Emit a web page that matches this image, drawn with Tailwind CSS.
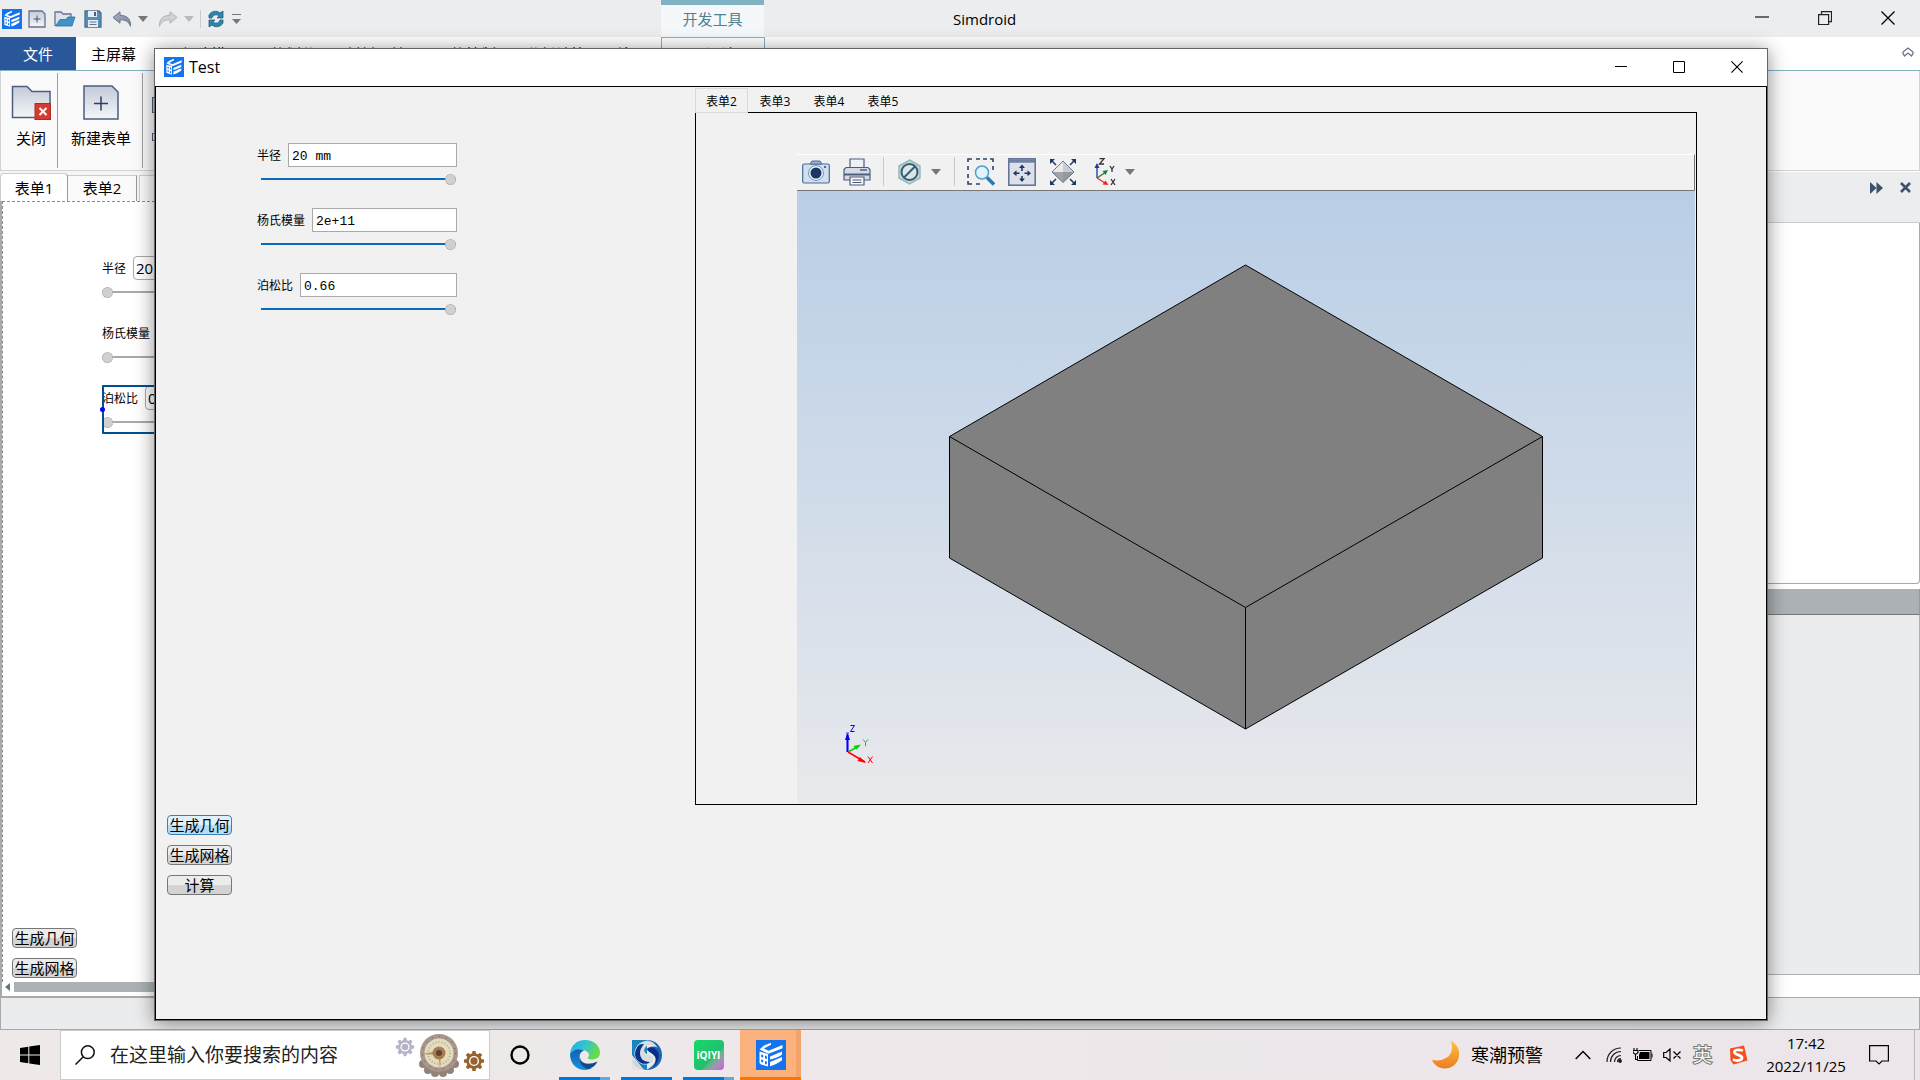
<!DOCTYPE html>
<html lang="zh-CN">
<head>
<meta charset="utf-8">
<title>Simdroid</title>
<script src="https://cdn.jsdelivr.net/npm/@tailwindcss/browser@4"></script>
</head>
<body class="h-screen overflow-hidden flex flex-col bg-white text-black text-[15px] leading-5 font-['Open_Sans','Noto_Sans_CJK_SC',sans-serif]">

<!-- Shared symbols -->
<svg class="absolute size-0" aria-hidden="true">
  <defs>
    <linearGradient id="steel" x1="0" y1="0" x2="0" y2="1"><stop offset="0" stop-color="#c3cbd8"/><stop offset="1" stop-color="#f4f6f8"/></linearGradient>
    <linearGradient id="arrowg" x1="0" y1="0" x2="1" y2="1"><stop offset="0" stop-color="#aab2c2"/><stop offset="1" stop-color="#77839b"/></linearGradient>
    <symbol id="logo" viewBox="0 0 30 30">
      <rect width="30" height="30" fill="#1673ee"/>
      <path d="M3.500 11.500l8.500 2.500v12.500L5 24.500 3.500 23z" fill="#fff"/>
      <path d="M5.200 14.500l2 .6v2.400l-2-.6zM9 15.500l1.800.5v3L9 18.500zM5.200 19.500l2 .6v2.400l-2-.6zM9 21l1.800.5v3L9 24z" fill="#1673ee"/>
      <path d="M3.500 9.500L8 5.500l7-2.700v2L8 8.500l4.500 2.300L26.500 5v3.200l-14 5.500zM14 16.500l12-5v3.200c-4 2.500-8 4-12 4.800zM14 22l12-5v3.200c-4 3-8 5-12 6z" fill="#fff"/>
    </symbol>
    <symbol id="down" viewBox="0 0 10 6"><path d="M0 0h10L5 6z" fill="currentColor"/></symbol>
    <symbol id="close" viewBox="0 0 14 14"><path d="M.5.5l13 13M13.500.5l-13 13" stroke="#000" stroke-width="1.300"/></symbol>
    <symbol id="gear" viewBox="-12 -12 24 24">
      <g fill="currentColor"><rect x="-2" y="-11" width="4" height="22" rx="1"/><rect x="-2" y="-11" width="4" height="22" rx="1" transform="rotate(45)"/><rect x="-2" y="-11" width="4" height="22" rx="1" transform="rotate(90)"/><rect x="-2" y="-11" width="4" height="22" rx="1" transform="rotate(135)"/><circle r="8.500"/></g>
      <circle r="5.500" fill="#fff"/><circle r="4" fill="currentColor"/>
    </symbol>
  </defs>
</svg>

<div class="relative flex-1 min-h-0 overflow-hidden flex flex-col">
  <!-- Main title bar -->
  <header class="h-[37px] shrink-0 bg-[#ebedef] relative flex items-center">
    <div class="flex items-center pl-0.5 text-[#777]">
      <svg class="size-5" role="img" aria-label="Simdroid"><use href="#logo"/></svg>
      <button class="ml-1.5" aria-label="新建"><svg class="size-[18px]" viewBox="0 0 18 18"><path d="M1 1h13l3 3v13H1z" fill="url(#steel)" stroke="#66728c" stroke-width="1.300"/><path d="M9 5.500v7M5.500 9h7" stroke="#44506e"/></svg></button>
      <button class="ml-2" aria-label="打开"><svg class="w-[22px] h-4" viewBox="0 0 22 16"><path d="M1 15V1h6l2 2h8v3" fill="#dde2ea" stroke="#66728c" stroke-width="1.300"/><path d="M1.500 15L6 8.500h6L14 6h7l-3 9z" fill="#3f93c6" stroke="#2d6f9f" stroke-width=".8"/></svg></button>
      <button class="ml-2" aria-label="保存"><svg class="size-[18px]" viewBox="0 0 18 18"><path d="M1 1h14l2 2v14H1z" fill="#4b93bf" stroke="#5a6a86" stroke-width="1.300"/><path d="M4 1h9v6H4zM4 10h10v7H4z" fill="#e9edf1"/><path d="M10 2h2v4h-2z" fill="#44607e"/><path d="M5.500 12h7M5.500 14.500h7" stroke="#66728c"/></svg></button>
      <button class="ml-2.5" aria-label="撤销"><svg class="w-5 h-4" viewBox="0 0 20 16"><path d="M1 6.500L8 .8v3.500c7 0 11 4 10.500 11C16.500 10 13 8.800 8 8.800v3.400z" fill="url(#arrowg)" stroke="#68758f"/></svg></button>
      <button class="ml-1.5" aria-label="撤销列表"><svg class="w-2.5 h-1.5"><use href="#down"/></svg></button>
      <button class="ml-2.5" aria-label="重做"><svg class="w-5 h-4" viewBox="0 0 20 16"><path d="M19 6.500L12 .8v3.500c-7 0-11 4-10.500 11C3.500 10 7 8.800 12 8.800v3.400z" fill="#cfd1d4" stroke="#b0b3b8"/></svg></button>
      <button class="ml-1.5 text-[#bbb]" aria-label="重做列表"><svg class="w-2.5 h-1.5"><use href="#down"/></svg></button>
      <span class="ml-1.5 w-px h-[18px] bg-[#ccc]"></span>
      <button class="ml-[7px]" aria-label="刷新"><svg class="w-4 h-[18px]" viewBox="0 0 16 18"><path d="M1 8V5c2-4 8-5 11-2l3-2v7H9l2-2C9 4 5 4.500 4 8zM15 10v3c-2 4-8 5-11 2l-3 2v-7h6l-2 2c2 2 6 1.500 7-2z" fill="#2f86ad" stroke="#25607f" stroke-width=".8"/></svg></button>
      <button class="ml-2" aria-label="自定义工具栏"><svg class="w-[9px] h-2.5" viewBox="0 0 9 10"><path d="M0 .5h9" stroke="#777"/><path d="M0 5h9L4.500 10z" fill="#777"/></svg></button>
    </div>
    <div class="absolute left-[661px] top-0 w-[103px] h-full border-t-[5px] border-[#7fb3c3] bg-[#f4f8fb] text-[#4b8190] flex justify-center items-start pt-1">开发工具</div>
    <h1 class="absolute left-[953px] top-[9px]">Simdroid</h1>
    <div class="ml-auto flex items-center pr-[25px] pb-0.5 gap-[49px]">
      <button aria-label="最小化"><svg class="w-3.5 h-3.5" viewBox="0 0 14 14"><path d="M0 6h14" stroke="#222" stroke-width="1.300"/></svg></button>
      <button aria-label="还原"><svg class="w-3.5 h-3.5" viewBox="0 0 14 14" fill="none" stroke="#222" stroke-width="1.200"><path d="M.6 3.600h10v10h-10zM3.500 3.500V.6h10v10h-3"/></svg></button>
      <button aria-label="关闭程序"><svg class="w-3.5 h-3.5"><use href="#close"/></svg></button>
    </div>
  </header>

  <!-- Ribbon tabs -->
  <nav class="h-[34px] shrink-0 border-b border-[#7fb3c3] flex items-center relative">
    <a href="#" class="w-[76px] h-[33px] bg-[#2a569a] text-white grid place-items-center">文件</a>
    <a href="#" class="ml-[15px]">主屏幕</a>
    <div class="ml-[30px] flex gap-[30px]">
      <a href="#">几何建模</a><a href="#">网格划分</a><a href="#">材料属性</a><a href="#">网格控制</a><a href="#">分析计算</a><a href="#">结果显示</a>
    </div>
    <div class="absolute left-[661px] top-0 h-full w-[104px] border border-b-0 border-[#7fb3c3] grid place-items-center">界面设计器</div>
    <button class="ml-auto mr-1.5 pb-1" aria-label="折叠功能区"><svg class="w-3 h-2.5" viewBox="0 0 12 10" fill="none" stroke="#6b7482" stroke-width="1.300"><path d="M1 6.500V5l5-4 5 4v1.500L9.500 9 6 6 2.500 9z"/></svg></button>
  </nav>

  <!-- Ribbon -->
  <section class="h-[100px] shrink-0 bg-[#fafafa] border-b border-x border-[#d2d2d2] flex py-0.5">
    <button class="w-14 pl-1 flex flex-col items-center pt-3 gap-2">
      <svg class="w-10 h-[35px]" viewBox="0 0 40 35"><path d="M1.500 32.500v-31H16l5 5h18v26z" fill="url(#steel)" stroke="#4c5d80" stroke-width="1.500"/><rect x="24" y="18.500" width="15.500" height="16" fill="#d8392e" stroke="#b32a22"/><path d="M28.500 23l7 7M35.500 23l-7 7" stroke="#fff" stroke-width="2"/></svg>
      关闭</button>
    <span class="w-px bg-[#a0a0a0]"></span>
    <button class="w-[84px] pl-0.5 flex flex-col items-center pt-3 gap-2">
      <svg class="w-9 h-[35px]" viewBox="0 0 36 35"><path d="M1 1h28l6 6v27H1z" fill="url(#steel)" stroke="#4c5d80" stroke-width="1.500"/><path d="M18 11.500v14M11 18.500h14" stroke="#2d3d63" stroke-width="1.500"/></svg>
      新建表单</button>
    <span class="w-px bg-[#a0a0a0]"></span>
    <div class="pl-[9px] pt-6 flex flex-col gap-5" aria-hidden="true"><span class="size-4 border border-[#4c5d80] bg-[#c3cbd8]"></span><span class="w-4 h-2 border border-[#4c5d80]"></span></div>
  </section>

  <!-- Workspace -->
  <div class="flex-1 min-h-0 flex bg-[#f5f5f5]">
    <main class="w-[900px] flex flex-col min-h-0">
      <nav class="h-[30px] shrink-0 pt-0.5 flex">
        <a href="#" class="w-[68px] pt-1 border border-[#ccc] border-b-0 border-r-[#999] rounded-t-sm bg-white flex justify-center items-start">表单1</a>
        <a href="#" class="w-[69px] mt-0.5 pt-0.5 border border-l-0 border-[#ccc] border-b-0 border-r-[#999] bg-[#fafafa] flex justify-center items-start">表单2</a>
        <a href="#" class="w-[69px] mt-0.5 pt-0.5 ml-0.5 border border-[#ccc] border-b-0 bg-[#fafafa] flex justify-center items-start">表单3</a>
      </nav>
      <div class="flex-1 min-h-0 bg-white border-l-2 border-b border-[#a9a9a9] flex flex-col">
        <form class="flex-1 min-h-0 border-l border-t border-dashed border-[#8c8c8c] pt-[54px] flex flex-col text-[12px]">
          <div class="ml-[99px] w-[200px] flex flex-col gap-[23px]">
            <div class="flex flex-col gap-1.5">
              <div class="flex items-center justify-between"><label for="b1" class="pt-0.5">半径</label><input id="b1" value="20 mm" class="w-[169px] h-6 px-0.5 border border-[#a9a9a9] rounded-sm text-[15px]"></div>
              <input type="range" min="0" max="100" value="0" aria-label="半径滑块" class="appearance-none h-3 w-full bg-transparent [&::-webkit-slider-runnable-track]:h-0.5 [&::-webkit-slider-runnable-track]:bg-[#a9a9a9] [&::-webkit-slider-thumb]:appearance-none [&::-webkit-slider-thumb]:size-[11px] [&::-webkit-slider-thumb]:-mt-1 [&::-webkit-slider-thumb]:rounded-full [&::-webkit-slider-thumb]:bg-[#d0d0d0] [&::-webkit-slider-thumb]:border [&::-webkit-slider-thumb]:border-dotted [&::-webkit-slider-thumb]:border-[#a0a0a0]">
            </div>
            <div class="flex flex-col gap-1.5">
              <div class="flex items-center justify-between"><label for="b2" class="pt-0.5">杨氏模量</label><input id="b2" value="2e+11" class="w-[145px] h-6 px-0.5 border border-[#a9a9a9] rounded-sm text-[15px]"></div>
              <input type="range" min="0" max="100" value="0" aria-label="杨氏模量滑块" class="appearance-none h-3 w-full bg-transparent [&::-webkit-slider-runnable-track]:h-0.5 [&::-webkit-slider-runnable-track]:bg-[#a9a9a9] [&::-webkit-slider-thumb]:appearance-none [&::-webkit-slider-thumb]:size-[11px] [&::-webkit-slider-thumb]:-mt-1 [&::-webkit-slider-thumb]:rounded-full [&::-webkit-slider-thumb]:bg-[#d0d0d0] [&::-webkit-slider-thumb]:border [&::-webkit-slider-thumb]:border-dotted [&::-webkit-slider-thumb]:border-[#a0a0a0]">
            </div>
            <div class="relative flex flex-col gap-1.5">
              <div class="flex items-center justify-between"><label for="b3" class="pt-0.5">泊松比</label><input id="b3" value="0.66" class="w-[157px] h-6 px-0.5 border border-[#a9a9a9] rounded-sm text-[15px]"></div>
              <input type="range" min="0" max="100" value="0" aria-label="泊松比滑块" class="appearance-none h-3 w-full bg-transparent [&::-webkit-slider-runnable-track]:h-0.5 [&::-webkit-slider-runnable-track]:bg-[#a9a9a9] [&::-webkit-slider-thumb]:appearance-none [&::-webkit-slider-thumb]:size-[11px] [&::-webkit-slider-thumb]:-mt-1 [&::-webkit-slider-thumb]:rounded-full [&::-webkit-slider-thumb]:bg-[#d0d0d0] [&::-webkit-slider-thumb]:border [&::-webkit-slider-thumb]:border-dotted [&::-webkit-slider-thumb]:border-[#a0a0a0]">
              <span class="absolute -top-px left-0 -right-0.5 h-[49px] border-2 border-[#00508f] rounded-[1px] pointer-events-none"></span>
              <span class="absolute top-[21px] -left-0.5 size-[5px] rounded-full bg-[#0000ff]"></span>
            </div>
          </div>
          <div class="mt-auto mb-1 ml-[9px] w-[65px] flex flex-col gap-2.5 text-[15px]">
            <button type="button" class="h-5 leading-[18px] border border-[#777] rounded-sm whitespace-nowrap flex justify-center bg-linear-to-b from-[#ececec] from-50% to-[#d3d3d3] to-50%">生成几何</button>
            <button type="button" class="h-5 leading-[18px] border border-[#777] rounded-sm whitespace-nowrap flex justify-center bg-linear-to-b from-[#ececec] from-50% to-[#d3d3d3] to-50%">生成网格</button>
          </div>
        </form>
        <div class="h-[14px] shrink-0 flex items-start gap-1 pl-[3px]"><svg class="w-[5px] h-2.5" viewBox="0 0 5 10"><path d="M5 1v8L0 5z" fill="#607580"/></svg><span class="h-2.5 flex-1 bg-[#abb1b4]"></span></div>
      </div>
    </main>

    <aside class="flex-1 flex flex-col min-h-0 bg-white">
      <div class="h-[52px] shrink-0 pt-2.5 pr-[9px] bg-[#ebedef] border-t border-white border-b border-b-[#ccc] flex justify-end items-start gap-[17px]">
        <button class="flex" aria-label="展开"><svg class="w-[13px] h-3" viewBox="0 0 13 12"><path d="M0 0l6.500 6L0 12zM6.500 0l6.500 6-6.500 6z" fill="#3c526c"/></svg></button>
        <button class="flex" aria-label="关闭面板"><svg class="w-[11px] h-[11px]" viewBox="0 0 11 11"><path d="M1 1l9 9M10 1l-9 9" stroke="#3c526c" stroke-width="2.600"/></svg></button>
      </div>
      <div class="h-[361px] shrink-0 border-b border-r border-[#a9a9a9] rounded-br-sm"></div>
      <div class="mt-[5px] h-[26px] shrink-0 bg-[#abb1b4] border-b border-[#777] border-r border-r-[#999]"></div>
      <div class="flex-1 mb-[22px] bg-[#ebecee] border-r border-b border-[#adb1b4]"></div>
    </aside>
  </div>
  <footer class="h-[33px] shrink-0 bg-[#ebecee] border border-[#a9a9a9]"></footer>

  <!-- Test window -->
  <section role="dialog" aria-labelledby="dlg" class="absolute left-[154px] right-[152px] top-12 bottom-[9px] border border-[#666] shadow-[0_2px_18px_rgba(0,0,0,0.45)] bg-[#f1f1f1] flex flex-col">
    <header class="h-[37px] shrink-0 bg-white flex items-center pl-[9px] pr-6 pb-0.5">
      <svg class="size-5"><use href="#logo"/></svg>
      <h2 id="dlg" class="ml-[5px] text-[16px]">Test</h2>
      <div class="ml-auto flex items-center gap-[46px]">
        <button aria-label="最小化窗口"><svg class="size-3" viewBox="0 0 12 12"><path d="M0 5.500h12" stroke="#000"/></svg></button>
        <button aria-label="最大化窗口"><svg class="size-3" viewBox="0 0 12 12"><path d="M.5.5h11v11H.5z" fill="none" stroke="#000"/></svg></button>
        <button aria-label="关闭窗口"><svg class="size-3"><use href="#close"/></svg></button>
      </div>
    </header>
    <div class="flex-1 min-h-0 border border-black flex">
      <form class="w-[539px] shrink-0 flex flex-col pt-14 pb-[124px]">
        <div class="ml-[101px] w-[200px] flex flex-col gap-[23px] text-[12px]">
          <div class="flex flex-col gap-1.5">
            <div class="flex items-center justify-between"><label for="a1" class="pt-0.5">半径</label><input id="a1" value="20 mm" class="w-[169px] h-6 px-[3px] pt-0.5 bg-white border border-[#a9a9a9] text-[13px] font-['Liberation_Mono','Noto_Sans_CJK_SC',monospace]"></div>
            <input type="range" min="0" max="100" value="100" aria-label="半径滑块" class="appearance-none h-3 ml-1 mr-px bg-transparent [&::-webkit-slider-runnable-track]:h-0.5 [&::-webkit-slider-runnable-track]:bg-[#0c6abb] [&::-webkit-slider-thumb]:appearance-none [&::-webkit-slider-thumb]:size-[11px] [&::-webkit-slider-thumb]:-mt-1 [&::-webkit-slider-thumb]:rounded-full [&::-webkit-slider-thumb]:bg-[#d0d0d0] [&::-webkit-slider-thumb]:border [&::-webkit-slider-thumb]:border-dotted [&::-webkit-slider-thumb]:border-[#a0a0a0]">
          </div>
          <div class="flex flex-col gap-1.5">
            <div class="flex items-center justify-between"><label for="a2" class="pt-0.5">杨氏模量</label><input id="a2" value="2e+11" class="w-[145px] h-6 px-[3px] pt-0.5 bg-white border border-[#a9a9a9] text-[13px] font-['Liberation_Mono','Noto_Sans_CJK_SC',monospace]"></div>
            <input type="range" min="0" max="100" value="100" aria-label="杨氏模量滑块" class="appearance-none h-3 ml-1 mr-px bg-transparent [&::-webkit-slider-runnable-track]:h-0.5 [&::-webkit-slider-runnable-track]:bg-[#0c6abb] [&::-webkit-slider-thumb]:appearance-none [&::-webkit-slider-thumb]:size-[11px] [&::-webkit-slider-thumb]:-mt-1 [&::-webkit-slider-thumb]:rounded-full [&::-webkit-slider-thumb]:bg-[#d0d0d0] [&::-webkit-slider-thumb]:border [&::-webkit-slider-thumb]:border-dotted [&::-webkit-slider-thumb]:border-[#a0a0a0]">
          </div>
          <div class="flex flex-col gap-1.5">
            <div class="flex items-center justify-between"><label for="a3" class="pt-0.5">泊松比</label><input id="a3" value="0.66" class="w-[157px] h-6 px-[3px] pt-0.5 bg-white border border-[#a9a9a9] text-[13px] font-['Liberation_Mono','Noto_Sans_CJK_SC',monospace]"></div>
            <input type="range" min="0" max="100" value="100" aria-label="泊松比滑块" class="appearance-none h-3 ml-1 mr-px bg-transparent [&::-webkit-slider-runnable-track]:h-0.5 [&::-webkit-slider-runnable-track]:bg-[#0c6abb] [&::-webkit-slider-thumb]:appearance-none [&::-webkit-slider-thumb]:size-[11px] [&::-webkit-slider-thumb]:-mt-1 [&::-webkit-slider-thumb]:rounded-full [&::-webkit-slider-thumb]:bg-[#d0d0d0] [&::-webkit-slider-thumb]:border [&::-webkit-slider-thumb]:border-dotted [&::-webkit-slider-thumb]:border-[#a0a0a0]">
          </div>
        </div>
        <div class="mt-auto ml-[11px] w-[65px] flex flex-col gap-2.5 text-[15px]">
          <button type="button" class="h-5 leading-[18px] border border-[#3c7fb1] rounded-sm whitespace-nowrap flex justify-center bg-linear-to-b from-[#dff2fc] from-50% to-[#b3def8] to-50%">生成几何</button>
          <button type="button" class="h-5 leading-[18px] border border-[#777] rounded-sm whitespace-nowrap flex justify-center bg-linear-to-b from-[#ececec] from-50% to-[#d3d3d3] to-50%">生成网格</button>
          <button type="button" class="h-5 leading-[18px] border border-[#777] rounded-sm whitespace-nowrap flex justify-center bg-linear-to-b from-[#ececec] from-50% to-[#d3d3d3] to-50%">计算</button>
        </div>
      </form>

      <div class="flex-1 min-w-0 flex flex-col pt-px mr-[69px] mb-[214px]">
        <div role="tablist" class="flex h-[25px] -mb-px shrink-0 text-[12px] relative">
          <button role="tab" aria-selected="true" class="w-[53px] pt-0.5 border border-[#d9d9d9] bg-[#f1f1f1]">表单2</button>
          <button role="tab" class="w-[54px] pt-1 border-b border-black">表单3</button>
          <button role="tab" class="w-[54px] pt-1 border-b border-black">表单4</button>
          <button role="tab" class="w-[54px] pt-1 border-b border-black">表单5</button>
        </div>
        <div class="flex-1 min-h-0 border border-black pl-[101px] pt-[41px] pr-px pb-px flex flex-col">
          <div class="h-[37px] shrink-0 border-t border-white border-r border-r-[#777] border-b border-b-[#777] flex items-center pl-[5px] pb-0.5 text-[#777]">
            <button aria-label="截图"><svg class="w-7 h-6" viewBox="0 0 28 24"><rect x=".7" y="4" width="26.600" height="19" rx="1.500" fill="#cfe0f2" stroke="#4c6a96" stroke-width="1.200"/><path d="M8 4l2-3h8l2 3z" fill="#9db3cf" stroke="#4c6a96"/><circle cx="14" cy="13" r="7.500" fill="#e8eff7" stroke="#8095b5"/><circle cx="14" cy="13" r="5.500" fill="#1d3563"/><circle cx="23" cy="7" r="1" fill="#26426f"/></svg></button>
            <button class="ml-[13px]" aria-label="打印"><svg class="w-7 h-7" viewBox="0 0 28 28" stroke="#4c5d80" stroke-width="1.200"><path d="M7 10V1h14v9" fill="#eef1f5"/><path d="M1 11.500L3 9.500h22l2 2V22H1z" fill="#d5dbe5"/><path d="M17 12h7" stroke-width="1.500"/><path d="M1 16.500h26" stroke-width="2"/><path d="M7 19h14v8H7z" fill="#f5f7f9"/><path d="M9.500 22h9M9.500 24.500h9"/></svg></button>
            <span class="ml-3 w-px h-[29px] bg-[#c9c9c9]"></span>
            <button class="ml-3.5" aria-label="显示样式"><svg class="w-[23px] h-[26px]" viewBox="0 0 23 26"><path d="M11.500 1L22 7v12l-10.500 6L1 19V7z" fill="#c4d6d9" stroke="#9bb8bd" stroke-width="1.500"/><circle cx="11.500" cy="13" r="8" fill="#dde4e6" stroke="#2f5f75" stroke-width="2"/><path d="M6 18.500L17 7.500" stroke="#2f5f75" stroke-width="2"/></svg></button>
            <button class="ml-2.5" aria-label="显示样式列表"><svg class="w-2.5 h-1.5"><use href="#down"/></svg></button>
            <span class="ml-[13px] w-px h-[29px] bg-[#c9c9c9]"></span>
            <button class="ml-3" aria-label="框选缩放"><svg class="w-7 h-7" viewBox="0 0 28 28" fill="none"><path d="M1 4V1h4M9 1h4M16 1h4M23 1h3v3M1 8v4M1 16v4M1 23v3h4M9 26h4M26 8v4" stroke="#2d4270" stroke-width="1.600"/><circle cx="15" cy="14.500" r="6.500" fill="#e4f3fb" stroke="#4e9fce" stroke-width="1.500"/><path d="M20 19.500l7 7" stroke="#2879b5" stroke-width="3.500"/></svg></button>
            <button class="ml-[13px]" aria-label="平移"><svg class="w-7 h-7" viewBox="0 0 28 28"><rect x=".8" y=".8" width="26.400" height="26.400" fill="#dce1e9" stroke="#5c6e93" stroke-width="1.500"/><path d="M1 3h26" stroke="#6e7fa2" stroke-width="3.500"/><path d="M14 6.500l3 3.500h-6zM14 24l3-3.500h-6zM5 15.300l3.500-3v6zM23 15.300l-3.500-3v6z" fill="#22375f"/><path d="M14 9v4M14 18v4M7 15.300h4.500M16.500 15.300H21" stroke="#22375f" stroke-width="1.600"/></svg></button>
            <button class="ml-[13px]" aria-label="适合窗口"><svg class="w-7 h-7" viewBox="0 0 28 28"><path d="M14 3l11 11H3z" fill="#e9e9ea"/><path d="M3 14h22L14 24.500z" fill="#9fa4ab"/><path d="M14 3.500v21l11-10.500z" fill="#777" opacity=".25"/><path d="M14 3L25 14 14 24.500 3 14z" fill="none" stroke="#667796"/><path d="M1 1h5L1 6zM27 1h-5l5 5zM1 27h5l-5-5zM27 27h-5l5-5z" fill="#22375f"/><path d="M2 2l5 5M26 2l-5 5M2 26l5-5M26 26l-5-5" stroke="#22375f" stroke-width="1.500"/></svg></button>
            <button class="ml-4" aria-label="视图方向"><svg class="w-6 h-7" viewBox="0 0 24 28" fill="none" stroke-width="1.300"><path d="M4 20V8" stroke="#1b3a9b"/><path d="M1.500 10L4 5l2.500 5z" fill="#1b3a9b"/><path d="M4 20l9-6" stroke="#178040"/><path d="M15 12l-2.500 5-3-4z" fill="#178040"/><path d="M4 20l8 5" stroke="#e22"/><path d="M15.500 27l-6-.5 3-4z" fill="#e22"/><g stroke="#333"><path d="M6.500.7H11L6.500 6H11M17 8l2 3 2-3M19 11v3M18 21l4 6M22 21l-4 6"/></g></svg></button>
            <button class="ml-2" aria-label="视图方向列表"><svg class="w-2.5 h-1.5"><use href="#down"/></svg></button>
          </div>
          <!-- 3D viewport -->
          <div class="relative flex-1 min-h-0 bg-linear-to-b from-[#b9cee6] to-[#e8e9ec]">
            <svg class="w-full h-full block" viewBox="0 0 898 612" role="img" aria-label="几何模型">
              <path d="M448.500 74L745.500 245.500V367L448.500 538 152.500 367V245.500z" fill="#808080" stroke="#000"/>
              <path d="M152.500 245.500L448.500 416.500 745.500 245.500M448.500 416.500V538" fill="none" stroke="#000"/>
            </svg>
            <svg class="absolute left-[42px] bottom-[34px] w-9 h-12" viewBox="0 0 36 48" fill="none" aria-hidden="true">
              <path d="M8.500 31V11" stroke="#8d8df0" stroke-width="3"/><path d="M8.500 31V14" stroke="#00f" stroke-width="1.500"/><path d="M6 19l2.500-7 2.500 7z" fill="#00e"/>
              <path d="M9 31l11-6" stroke="#00d000" stroke-width="1.500"/><path d="M22 23.500l-4.500 5-3-3.500z" fill="#00d000"/>
              <path d="M9 31l17 10" stroke="#f00" stroke-width="1.500"/><path d="M27 42l-8.500-2 2.500-4z" fill="#f00"/>
              <path d="M11.500 4.500h4l-4 6h4" stroke="#00f"/><path d="M24 18.500l2.500 3 2.500-3M26.500 21.500v3.500" stroke="#00d000"/><path d="M29 35.500l4.500 6.500M33.500 35.500L29 42" stroke="#f00"/>
            </svg>
          </div>
        </div>
      </div>
    </div>
  </section>
</div>

<!-- Taskbar -->
<footer class="h-[50px] shrink-0 bg-linear-to-r from-[#eee9e8] to-[#ece6eb] flex items-center">
  <button class="w-[60px] flex justify-center" aria-label="开始"><svg class="size-5" viewBox="0 0 20 20"><path d="M0 3l8.300-1.200v7.700H0zM9.300 1.600L20 0v9.500H9.300zM0 10.500h8.300v7.700L0 17zM9.300 10.500H20V20L9.300 18.400z"/></svg></button>
  <label class="w-[430px] h-full border border-[#ccc] bg-white flex items-center pl-3.5">
    <svg class="size-5" viewBox="0 0 20 20" fill="none" stroke="#111" stroke-width="1.500"><circle cx="12.800" cy="7.200" r="6.400"/><path d="M8.300 11.800L.5 19.500"/></svg>
    <input type="text" placeholder="在这里输入你要搜索的内容" aria-label="搜索" class="ml-[15px] w-[285px] text-[19px] placeholder:text-[#222]">
    <svg class="size-5 text-[#b5b3c6] mb-4" aria-hidden="true"><use href="#gear"/></svg>
    <svg class="ml-[3px] w-[42px] h-11" viewBox="0 0 42 44" aria-hidden="true"><g fill="#93827a"><circle cx="21" cy="24" r="17"/><circle cx="5" cy="31" r="4"/><circle cx="10" cy="37" r="4"/><circle cx="17" cy="40" r="4"/><circle cx="25" cy="40" r="4"/><circle cx="32" cy="37" r="4"/><circle cx="37" cy="31" r="4"/></g><circle cx="21" cy="20" r="19" fill="#a8958b"/><circle cx="21" cy="20" r="16.500" fill="none" stroke="#6f5e57" stroke-dasharray="1 6"/><circle cx="21" cy="20" r="14.500" fill="#e3dcc0"/><circle cx="21" cy="20" r="11" fill="none" stroke="#b9ab86" stroke-dasharray="1 2" stroke-width="2"/><path d="M3 21l17-3v4zM20 20h3l-1 17z" fill="#c29a62"/><circle cx="21" cy="20" r="6.500" fill="#a87c4d"/><circle cx="21" cy="20" r="3" fill="#5f4632"/></svg>
    <svg class="ml-[3px] size-[22px] text-[#97632c] mt-3" aria-hidden="true"><use href="#gear"/></svg>
  </label>
  <button class="w-[59px] flex justify-center" aria-label="Cortana"><svg class="size-5" viewBox="0 0 20 20"><circle cx="10" cy="10" r="8.500" fill="none" stroke="#000" stroke-width="2.400"/></svg></button>
  <nav class="h-full flex pl-[10px]">
    <button aria-label="Edge" class="w-[51px] h-full border-b-[3px] border-[#0078d7] flex items-center justify-center pt-[3px] relative">
      <svg class="size-[30px]" viewBox="0 0 30 30"><defs><linearGradient id="e1" x1="0" x2="1" y1="0" y2=".4"><stop offset="0" stop-color="#2aa6e0"/><stop offset=".5" stop-color="#2fc4d4"/><stop offset="1" stop-color="#66dc4a"/></linearGradient><linearGradient id="e2" x1="0" x2="0" y1="0" y2="1"><stop offset="0" stop-color="#0c63b0"/><stop offset="1" stop-color="#1b8fe0"/></linearGradient></defs><path d="M0 14C1 5 7 0 15 0c9 0 15 6 15 12.500 0 5-4 7-8 7-3 0-4.500-1-4-2 2-2 1-5-2-6.500C10 8.500 3 9 0 14z" fill="url(#e1)"/><path d="M0 14c3-5 9-6 14-3.500-4 1.500-5 5-4 9 1 5 6 9 12 8.500-2 1.300-4.500 2-7 2C6 30 0 23 0 14z" fill="url(#e2)"/><path d="M10 17c0 6 7 9 17.500 4.500C26 25 22 28.500 18 29c-5-1-9-6-8-12z" fill="#114a8b"/></svg>
      <span class="absolute right-0 -bottom-[3px] w-2.5 h-[3px] bg-[#62a9e4]"></span>
    </button>
    <button aria-label="浏览器" class="ml-[11px] w-[51px] h-full border-b-[3px] border-[#0078d7] flex items-center justify-center pt-[3px]">
      <svg class="size-[30px]" viewBox="0 0 30 30"><path d="M0 0h15v30H9L0 20z" fill="#1684bd"/><path d="M0 15v15h12z" fill="#e4e4e6"/><path d="M0 20C2 27 8 30 15 30c-5-1-9-4-11-9z" fill="#cfd3d8"/><path d="M12 1C22-2 30 6 30 15c0 9-7 15-16 15 7-3 11-8 9-13-2-4-7-5-8-8 3-3 8-3 11-1C23 4 18 2 12 1z" fill="#1766b5"/><path d="M15 9c4-3 9-1 11 3 2 5 0 11-5 15 3-4 4-8 2-11s-7-4-8-7z" fill="#0a2d86"/><path d="M13 1C5 3 1 10 3 17c2 6 8 9 14 7 5-2 6-7 1-9-5-1-7-4-5-7 2-4 8-4 12-1C22 2 18 0 13 1z" fill="#d9dde1"/><path d="M7 5C1 11 2 20 9 23c3 1.500 7 1 9-1-7 0-10-4-10-9 0-4 2-6 4-9-2 0-4 0-5 1z" fill="#0a3288"/></svg>
    </button>
    <button aria-label="爱奇艺" class="ml-[11px] w-[51px] h-full border-b-[3px] border-[#0078d7] flex items-center justify-center pt-[3px] relative">
      <span class="size-[30px] rounded-[4px] bg-linear-to-br from-[#17d86a] via-[#1fc06e] via-60% to-[#d63bf0] text-white text-[10px] font-bold leading-[30px] text-center">iQIYI</span>
      <span class="absolute right-0 -bottom-[3px] w-2.5 h-[3px] bg-[#62a9e4]"></span>
    </button>
    <button aria-label="Simdroid" class="ml-1.5 w-[61px] h-full bg-[#fbb27c] border-b-[3px] border-[#ff7300] flex items-center justify-center pt-[3px] relative">
      <svg class="size-[30px]"><use href="#logo"/></svg>
      <span class="absolute right-0 top-0 w-[5px] h-full bg-[#f3a46a]"></span>
    </button>
  </nav>
  <div class="ml-auto h-full flex items-center">
    <svg class="size-[30px]" viewBox="0 0 30 30" role="img" aria-label="月亮"><defs><linearGradient id="moon" x1="0" x2="0" y1="0" y2="1"><stop offset="0" stop-color="#f8c53e"/><stop offset="1" stop-color="#ee7b22"/></linearGradient></defs><path d="M20 1c6 3 9 9 8 15-1 8-8 13-15 12.500C8 28 3 25 1 20c9 2 24-2 19-19z" fill="url(#moon)"/></svg>
    <span class="ml-2.5 text-[18px]">寒潮预警</span>
    <button class="ml-8" aria-label="显示隐藏的图标"><svg class="w-4 h-2.5" viewBox="0 0 16 10"><path d="M.7 9L8 1.500 15.300 9" fill="none" stroke="#000" stroke-width="1.400"/></svg></button>
    <svg class="ml-[15px] size-4" viewBox="0 0 16 16" fill="none" stroke="#222" stroke-width="1.200" role="img" aria-label="网络"><path d="M1 15C1 7 7 1 15 1M4.500 15C4.500 9 9 4.500 15 4.500M8.500 15c0-4 3-6.500 6.500-6.500M11.500 15c0-2 1.500-3.500 3.500-3.500"/><circle cx="14" cy="14" r="1.300" fill="#000"/></svg>
    <svg class="ml-[11px] w-5 h-3.5" viewBox="0 0 20 14" role="img" aria-label="电池"><path d="M1 0v2M4 0v2M0 2.500h5v2L3.500 6h-2L0 4.500zM2.500 6v5.500H4" fill="none" stroke="#000" stroke-width="1.100"/><path d="M6 2.500h12v10H4.500V8" fill="none" stroke="#000"/><path d="M7 4h9.500v7H6V7z"/><path d="M18.500 5.500h1v4h-1z"/></svg>
    <svg class="ml-2.5 w-[18px] h-3.5" viewBox="0 0 18 14" fill="none" stroke="#000" stroke-width="1.200" role="img" aria-label="静音"><path d="M.7 4.500h2.500L7 1v12L3.200 9.500H.7zM10.500 3.500l7 7M17.500 3.500l-7 7"/></svg>
    <span class="ml-3 text-[19px] text-[#f5f2f3] [-webkit-text-stroke:2px_#777] [paint-order:stroke_fill]">英</span>
    <svg class="ml-4 size-5" viewBox="0 0 20 20" role="img" aria-label="输入法"><path d="M2 3.500L16 .5l3.500 15-14 4-3-4z" fill="#f0501f"/><path d="M15 5.500C10 4 6 5 6.500 7.500S14.500 10 14 13s-6 3-9 1.500" fill="none" stroke="#fff" stroke-width="2.800"/></svg>
    <div class="ml-[15px] w-[86px] text-center leading-[23px] text-[15px]"><div>17:42</div><div>2022/11/25</div></div>
    <button class="ml-5" aria-label="通知"><svg class="w-5 h-5" viewBox="0 0 20 20"><path d="M.6.6h18.800v15.400H13l-3 3-3-3H.6z" fill="none" stroke="#000" stroke-width="1.200"/></svg></button>
    <span class="ml-[25px] w-px h-full bg-[#bbb] mr-[5px]"></span>
  </div>
</footer>
</body>
</html>
